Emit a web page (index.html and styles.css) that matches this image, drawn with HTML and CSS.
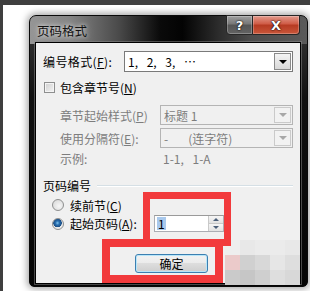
FILE: index.html
```html
<!DOCTYPE html>
<html lang="zh-CN">

<head>
    <meta charset="UTF-8">
    <meta name="viewport" content="width=device-width, initial-scale=1.0">
    <title>页码格式</title>
    <link rel="stylesheet" href="styles.css">
</head>

<body>
    <div class="screen">
        <div class="dialog">
            <div class="titlebar">
                <span class="title">页码格式</span>
                <div class="caption-btns">
                    <span class="cap help">?</span>
                    <span class="cap close">X</span>
                </div>
            </div>

            <div class="client">
                <div class="row r-format">
                    <span class="lbl">编号格式(<u>F</u>):</span>
                    <div class="select wide">
                        <span class="val spaced">1, 2, 3, …</span>
                        <span class="arrow"></span>
                    </div>
                </div>

                <div class="row r-check">
                    <span class="checkbox"></span>
                    <span>包含章节号(<u>N</u>)</span>
                </div>

                <div class="row r-sub first">
                    <span class="sublbl">章节起始样式(<u>P</u>)</span>
                    <div class="select narrow disabled">
                        <span class="val">标题 1</span>
                        <span class="arrow"></span>
                    </div>
                </div>

                <div class="row r-sub">
                    <span class="sublbl">使用分隔符(<u>E</u>):</span>
                    <div class="select narrow disabled">
                        <span class="val"><span class="dash">-</span>(连字符)</span>
                        <span class="arrow"></span>
                    </div>
                </div>

                <div class="row r-sample">
                    <span class="sublbl">示例:</span>
                    <span class="sample spaced">1-1, 1-A</span>
                </div>

                <div class="group">页码编号</div>

                <div class="row r-radio">
                    <span class="radio"></span>
                    <span>续前节(<u>C</u>)</span>
                </div>

                <div class="row r-radio r-start">
                    <span class="radio checked"></span>
                    <span class="startlbl">起始页码(<u>A</u>):</span>
                    <div class="spin">
                        <span class="spin-val">1</span>
                        <div class="spin-btns">
                            <span class="spin-up"></span>
                            <span class="spin-down"></span>
                        </div>
                    </div>
                </div>

                <div class="row r-ok">
                    <button class="ok">确定</button>
                </div>
            </div>
        </div>

        <!-- watermark, pixelated -->
        <div class="blur">
            <span class="b1"></span><span class="b2"></span><span class="b3"></span><span class="b3"></span><span class="b2"></span>
            <span class="b4"></span><span class="b5"></span><span class="b6"></span><span class="b7"></span><span class="b8"></span>
            <span class="b9"></span><span class="b10"></span><span class="b11"></span><span class="b8"></span><span class="b6"></span>
        </div>

        <!-- red annotation boxes -->
        <div class="mark mark-a"></div>
        <div class="mark mark-b"></div>
    </div>
</body>

</html>
```

FILE: styles.css
```css
* {
    margin: 0;
    padding: 0;
    box-sizing: border-box;
}

body {
    background-color: #3f3f3f;
    font-family: "Noto Sans CJK SC", "Noto Sans", sans-serif;
    font-size: 12px;
    color: #000;
}

u {
    text-decoration: underline;
}

.screen {
    position: relative;
    margin: 5px 0 0 3px;
    height: 286px;
    padding: 10px 0 0 26px;
    background-color: #fff;
    overflow: hidden;
}

.dialog {
    width: 279px;
    height: 272px;
    display: flex;
    flex-direction: column;
    padding: 0 7px 3px 6px;
    border: 1px solid #0a0a0a;
    border-radius: 7px 7px 5px 5px;
    background:
        linear-gradient(90deg, #959595 0%, #858585 14%, #4a4a4a 32%, #0a0a0a 47%, #030303 55%, #2c2c2c 68%, #4c4c4c 80%, #5a5a5a 100%) top / 100% 28px no-repeat,
        linear-gradient(180deg, #3a3a3a 0%, #111 30%, #050505 100%);
    box-shadow: 0 0 7px 2px rgba(0, 0, 0, 0.35);
}

.titlebar {
    height: 27px;
    display: flex;
    align-items: flex-start;
}

.title {
    margin: 6px 0 0 1px;
    font-size: 12.5px;
    line-height: 17px;
    color: #111;
    text-shadow: 0 0 4px rgba(255, 255, 255, 0.8), 0 0 8px rgba(255, 255, 255, 0.5);
}

.caption-btns {
    display: flex;
    margin: -1px 0 0 auto;
}

.cap {
    height: 20px;
    display: flex;
    align-items: center;
    justify-content: center;
    color: #fff;
    font-family: "DejaVu Sans", sans-serif;
    font-weight: bold;
    font-size: 13px;
    border: 1px solid #262626;
    text-shadow: 0 0 2px #000, 0 0 1px #000;
    box-shadow: inset 0 0 0 1px rgba(255, 255, 255, 0.25);
}

.help {
    width: 27px;
    border-radius: 0 0 0 4px;
    background: linear-gradient(180deg, #a0a0a0 0%, #777 45%, #555 50%, #636363 100%);
}

.close {
    width: 47px;
    border-left: none;
    border-radius: 0 0 4px 0;
    background: linear-gradient(180deg, #e29a8c 0%, #cf5a45 45%, #b53a22 50%, #c8563a 100%);
}

.client {
    height: 240px;
    display: flex;
    flex-direction: column;
    padding: 8px 7px 0 7px;
    background-color: #f0f0f0;
    box-shadow: 0 0 0 1px #000, 0 0 0 2px rgba(140, 140, 140, 0.5);
}

.row {
    display: flex;
    align-items: center;
    white-space: nowrap;
}

.r-format {
    height: 21px;
}

.lbl {
    width: 81px;
    letter-spacing: 0.4px;
}

.select {
    height: 100%;
    display: flex;
    align-items: center;
    padding-left: 3px;
    border: 1px solid #7a7a7a;
    background-color: #fff;
}

.spaced {
    word-spacing: 6px;
}

.wide {
    width: 169px;
}

.narrow {
    width: 133px;
}

.arrow {
    width: 17px;
    height: calc(100% - 2px);
    margin: 0 1px 0 auto;
    display: flex;
    align-items: center;
    justify-content: center;
    border: 1px solid #8a8a8a;
    background: linear-gradient(180deg, #f4f4f4, #d8d8d8);
}

.arrow::after {
    content: "";
    border-left: 4px solid transparent;
    border-right: 4px solid transparent;
    border-top: 4px solid #000;
}

.disabled {
    border-color: #b4b4b4;
    background-color: #f0f0f0;
    color: #7d7d7d;
}

.disabled .arrow {
    border-color: #cacaca;
    background: #f2f2f2;
}

.disabled .arrow::after {
    border-top-color: #a8a8a8;
}

.dash {
    margin-right: 20px;
}

.r-check {
    height: 15px;
    margin-top: 8px;
}

.checkbox {
    width: 11px;
    height: 11px;
    margin: 0 5px 0 1px;
    border: 1px solid #8e8f8f;
    background: linear-gradient(135deg, #cfcfcf, #f4f4f4);
    box-shadow: inset 0 0 0 1px #f4f4f4;
}

.r-sub {
    height: 20px;
    margin-top: 3px;
    padding-left: 17px;
    color: #7d7d7d;
}

.r-sub.first {
    margin-top: 10px;
}

.sublbl {
    width: 100px;
}

.r-sample {
    height: 16px;
    margin-top: 2px;
    padding-left: 17px;
    color: #7d7d7d;
}

.sample {
    padding-left: 3px;
}

.group {
    height: 15px;
    margin-top: 12px;
    display: flex;
    align-items: center;
    white-space: nowrap;
}

.group::after {
    content: "";
    flex: 1;
    margin-left: 6px;
    border-top: 1px solid #d5dfe5;
    border-bottom: 1px solid #fff;
}

.r-radio {
    height: 14px;
    margin-top: 5px;
}

.radio {
    width: 12px;
    height: 12px;
    margin: 0 6px 0 9px;
    border: 1px solid #8e8f8f;
    border-radius: 50%;
    background: radial-gradient(circle at 60% 60%, #f6f6f6, #d4d4d4);
}

.radio.checked {
    background: radial-gradient(circle at 45% 40%, #7fc4ee 0, #2a6fb0 2px, #1b4f86 4px, #e8e8e8 4.5px, #f2f2f2 100%);
}

.r-start {
    height: 17px;
    margin-top: 3px;
}

.startlbl {
    width: 84px;
}

.spin {
    width: 70px;
    height: 100%;
    display: flex;
    align-items: center;
    padding-left: 2px;
    border: 1px solid #abadb3;
    border-top-color: #9a9a9a;
    background-color: #fff;
}

.spin-val {
    padding: 0 1px;
    line-height: 13px;
    background-color: #a8c8ec;
}

.spin-btns {
    width: 15px;
    height: 100%;
    margin-left: auto;
    display: flex;
    flex-direction: column;
    border-left: 1px solid #c9c9c9;
}

.spin-up,
.spin-down {
    flex: 1;
    display: flex;
    align-items: center;
    justify-content: center;
    background: linear-gradient(180deg, #f6f6f6, #e2e2e2);
}

.spin-up {
    border-bottom: 1px solid #c9c9c9;
}

.spin-up::after {
    content: "";
    border-left: 3px solid transparent;
    border-right: 3px solid transparent;
    border-bottom: 3px solid #4c607a;
}

.spin-down::after {
    content: "";
    border-left: 3px solid transparent;
    border-right: 3px solid transparent;
    border-top: 3px solid #4c607a;
}

.r-ok {
    height: 19px;
    margin-top: 22px;
}

.ok {
    width: 73px;
    height: 19px;
    margin-left: 92px;
    font-family: "Noto Sans CJK SC", sans-serif;
    font-size: 12px;
    line-height: 15px;
    color: #000;
    border: 1px solid #3c7fb1;
    border-radius: 3px;
    background: linear-gradient(180deg, #f2f2f2 0%, #ebebeb 50%, #dddddd 50%, #cfcfcf 100%);
    box-shadow: inset 0 0 0 1px #b8e6f9;
}

.blur {
    position: absolute;
    left: 222px;
    top: 235px;
    display: grid;
    grid-template-columns: repeat(5, 15px);
    grid-auto-rows: 15px;
}

.b1 { background-color: #eeeeee; }
.b2 { background-color: #e8e8e8; }
.b3 { background-color: #ebebeb; }
.b4 { background-color: #ebcaca; }
.b5 { background-color: #d0d0d0; }
.b6 { background-color: #d8d8d8; }
.b7 { background-color: #e6e6e6; }
.b8 { background-color: #dedede; }
.b9 { background-color: #cacaca; }
.b10 { background-color: #c6c6c6; }
.b11 { background-color: #cfcfcf; }

.mark {
    position: absolute;
    border: 7px solid #f23a3c;
}

.mark-a {
    left: 140px;
    top: 187px;
    width: 88px;
    height: 54px;
}

.mark-b {
    left: 99px;
    top: 234px;
    width: 121px;
    height: 44px;
    border-width: 8px;
}
```
